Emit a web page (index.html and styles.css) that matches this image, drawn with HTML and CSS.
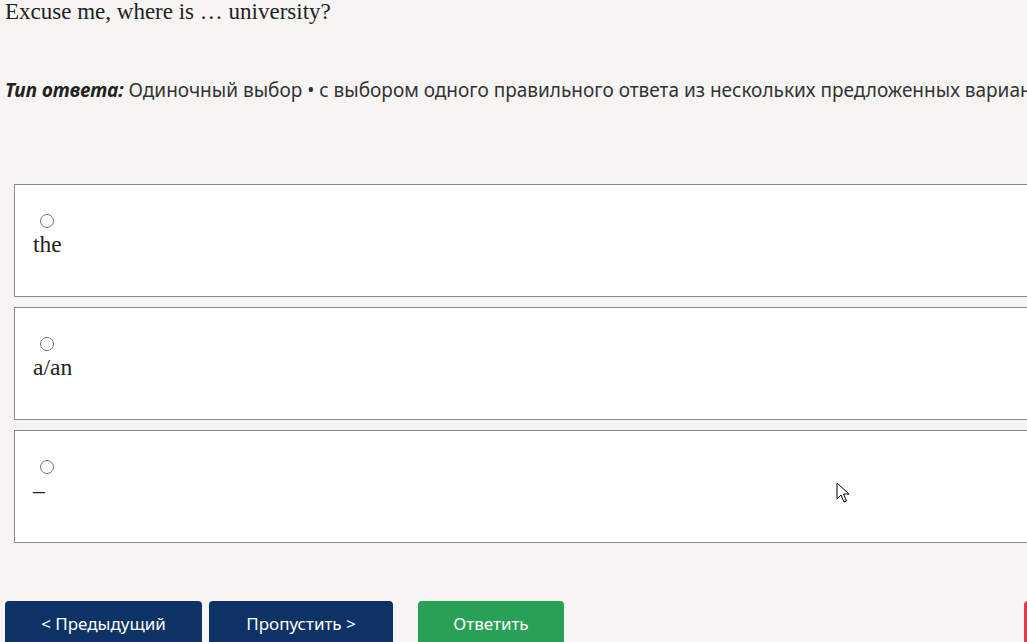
FILE: index.html
```html
<!DOCTYPE html>
<html lang="ru">
<head>
<meta charset="utf-8">
<link rel="stylesheet" href="styles.css">
</head>
<body>
<div class="page">
  <h1 class="question">Excuse me, where is … university?</h1>
  <p class="type"><b><i>Тип ответа:</i></b> Одиночный выбор • с выбором одного правильного ответа из нескольких предложенных вариан</p>
  <div class="options">
    <label class="option"><input type="radio" name="a" class="radio"><span class="otext">the</span></label>
    <label class="option"><input type="radio" name="a" class="radio"><span class="otext">a/an</span></label>
    <label class="option"><input type="radio" name="a" class="radio"><span class="otext">–</span></label>
  </div>
  <div class="buttons">
    <button class="btn navy prev">&lt; Предыдущий</button>
    <button class="btn navy skip">Пропустить &gt;</button>
    <button class="btn green answer">Ответить</button>
    <span class="spacer"></span>
    <span class="btn red finish"></span>
  </div>
</div>
<svg class="cursor" width="14" height="22" viewBox="0 0 14 22"><path d="M1 1 L1 17 L5 13 L8 20 L10.5 19 L7.5 12 L13 12 Z" fill="#fff" stroke="#000" stroke-width="1"/></svg>
</body>
</html>
```
FILE: styles.css
```css
html, body {
  margin: 0;
  padding: 0;
  background: #f6f5f3;
  overflow: hidden;
  width: 1027px;
  height: 642px;
}
.page {
  width: 1300px;
  padding: 0 0 0 5px;
}
.question {
  font-family: "Liberation Serif", serif;
  font-weight: normal;
  font-size: 23px;
  line-height: 24px;
  color: #222;
  margin: 0;
}
.type {
  font-family: "Noto Sans", "Open Sans", sans-serif;
  font-size: 19px;
  color: #333;
  margin: 53px 0 0 0;
  line-height: 26px;
  white-space: nowrap;
}
.type b { color: #222; }
.options {
  display: flex;
  flex-direction: column;
  gap: 10px;
  margin: 81px 0 0 9px;
}
.option {
  display: flex;
  flex-direction: column;
  align-items: flex-start;
  height: 111px;
  box-sizing: content-box;
  border: 1px solid #8a8a8a;
  background: #fff;
  padding: 0 0 0 18px;
}
.radio {
  margin: 29px 0 0 7px;
  width: 14px;
  height: 14px;
}
.otext {
  font-family: "Liberation Serif", serif;
  font-size: 23.5px;
  line-height: 26px;
  color: #222;
  margin-top: 3px;
}
.buttons {
  display: flex;
  margin-top: 58px;
  width: 1039px;
}
.btn {
  border: none;
  border-radius: 4px;
  height: 48px;
  color: #fff;
  font-family: "Noto Sans", "Open Sans", sans-serif;
  font-size: 17px;
  padding: 0 0 4px 0;
  cursor: pointer;
  display: block;
}
.navy { background: #0c3266; }
.green { background: #28a055; }
.red { background: #e23a48; }
.prev { width: 197px; }
.skip { width: 184px; margin-left: 7px; }
.answer { width: 146px; margin-left: 25px; }
.spacer { flex: 1; }
.finish { width: 20px; flex: none; }
.cursor {
  position: absolute;
  left: 836px;
  top: 482px;
}
```
